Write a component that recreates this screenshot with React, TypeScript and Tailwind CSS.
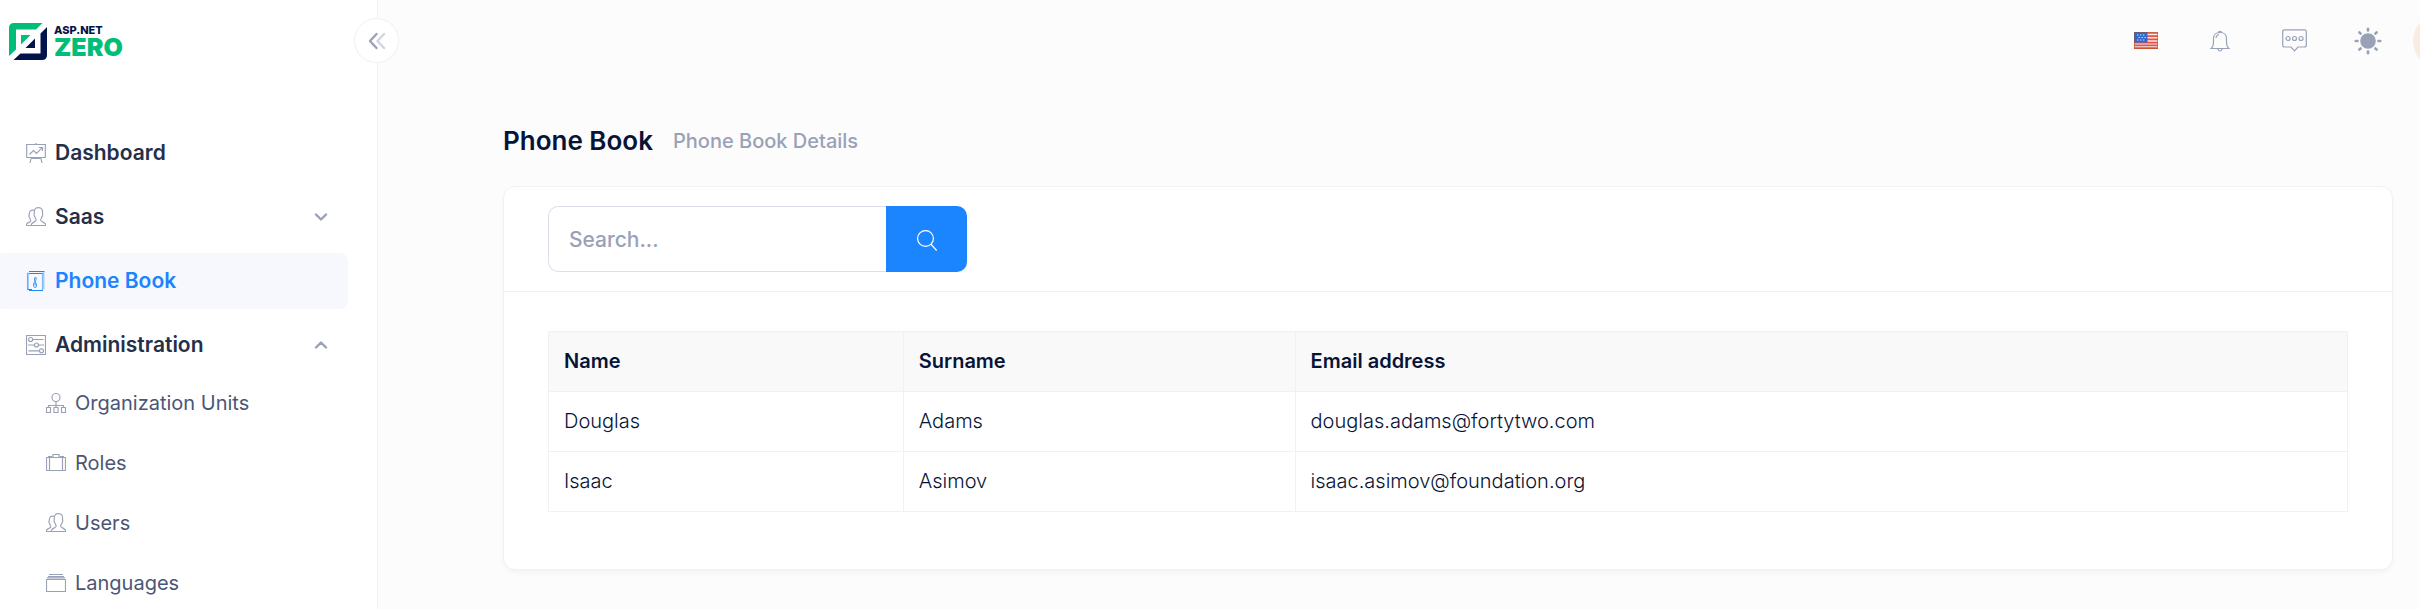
import type { ReactNode } from "react";

type IconProps = { className?: string; children: ReactNode };

function LineIcon({ className = "", children }: IconProps) {
  return (
    <svg
      viewBox="0 0 20 20"
      fill="none"
      stroke="currentColor"
      strokeWidth="1.150"
      aria-hidden="true"
      className={`size-5 shrink-0 ${className}`}
    >
      {children}
    </svg>
  );
}

const icons = {
  board: (
    <LineIcon>
      <path d="M0 1.5H20M.7 1.5V14.5H19.3V1.5M10 0V1.5M5 15.5L4 20M15 15.5L16 20M5 15.5H15" />
      <path d="M3.5 11.5L7.5 7.5L10.5 10.5L16 4.8M13 4.5H16.5V8" />
    </LineIcon>
  ),
  users: (
    <LineIcon>
      <path d="M5.5 18.5H19.5V17.2C19.2 15.4 14.8 14.9 14.6 13.3C14.5 12.2 15.6 11.6 16 9.5C16.7 9 17 7.6 16.5 7C16.9 3 16 .6 12.4.6S8 3 8.3 7C7.8 7.6 8.1 9 8.8 9.5C9.2 11.6 10.3 12.2 10.2 13.3C10 14.9 5.8 15.4 5.5 17.2Z" />
      <path d="M8 3.2C5 2.6 3 4 3.2 8.2C2.7 8.8 2.9 10 3.6 10.4C3.9 12.2 4.9 12.8 4.8 13.9C4.6 15.3.7 15.5.5 17.3V18.5H5.5" />
    </LineIcon>
  ),
  book: (
    <LineIcon>
      <path d="M2 1.5V19M17.500 1V18.500" strokeWidth="2" opacity=".35" />
      <path d="M3 .5H18.500M3 2.500H16.500M3 19.500H17M1.500 18.500H6" />
      <path d="M16.500 2.500V19.500M1.500 2V18.500" opacity=".45" />
      <path d="M9.500 6C10.500 7.500 10.500 8.500 9 10.500C7 12.500 7 16 9 16.500S11 13 9 10.500C8 9 8.500 7 9.500 6ZM9 12V14.500" strokeWidth=".9" />
    </LineIcon>
  ),
  sliders: (
    <LineIcon>
      <path d="M.5.5H19.5V19.5H.5ZM6.5 4.5H17.5M2 10H8.5M12.5 10H18M2.5 15.8H13.5" />
      <circle cx="4.6" cy="4.5" r="2" />
      <circle cx="10.5" cy="10" r="2" />
      <circle cx="15.5" cy="15.8" r="2" />
    </LineIcon>
  ),
  org: (
    <LineIcon>
      <circle cx="10" cy="4.5" r="4" />
      <path d="M10 8.5V14.5M2.5 14.5V12.5H17.5V14.5M.5 14.5H4.5V19.5H.5ZM8 14.5H12V19.5H8ZM15.5 14.5H19.5V19.5H15.5Z" />
    </LineIcon>
  ),
  case: (
    <LineIcon>
      <path d="M.5 4.5H19.500V17.500H.5ZM3.500 4.500V17.500M16.500 4.500V17.500M7 4V1.500H13V4M2 3.500H6M14 3.500H18" />
    </LineIcon>
  ),
  stack: (
    <LineIcon>
      <path d="M.5 6.5H19.5V18.5H.5ZM3 1.5H17M2 3.5H18M1 4.8H19" />
    </LineIcon>
  ),
};

function Chevron({ up = false }: { up?: boolean }) {
  return (
    <svg viewBox="0 0 14 8" fill="none" stroke="#99a1b7" strokeWidth="2.400" strokeLinecap="round" strokeLinejoin="round" className="ml-auto h-2 w-3.5" aria-hidden="true">
      <path d={up ? "M2 6.5L7 1.5L12 6.5" : "M2 1.5L7 6.5L12 1.5"} />
    </svg>
  );
}

const menu = [
  { label: "Dashboard", icon: icons.board },
  { label: "Saas", icon: icons.users, state: "closed" },
  { label: "Phone Book", icon: icons.book, active: true },
  { label: "Administration", icon: icons.sliders, state: "open" },
];

const submenu = [
  { label: "Organization Units", icon: icons.org },
  { label: "Roles", icon: icons.case },
  { label: "Users", icon: icons.users },
  { label: "Languages", icon: icons.stack },
];

const people = [
  { name: "Douglas", surname: "Adams", email: "douglas.adams@fortytwo.com" },
  { name: "Isaac", surname: "Asimov", email: "isaac.asimov@foundation.org" },
];

function Logo() {
  return (
    <a href="#" aria-label="ASP.NET Zero" className="flex items-center gap-[7px]">
      <svg viewBox="0 0 38 37" className="h-[37px] w-[38px]" aria-hidden="true">
        <path d="M5 0H33.5L27 6.5H7V26.5L0 33V5Q0 0 5 0Z" fill="#00bd78" />
        <path d="M38 4V32Q38 37 33 37H4.500L11.500 30.500H31.500V10.500Z" fill="#02124b" />
        <path d="M12 12H21.500L12 21.500Z" fill="#00bd78" />
        <path d="M26 15.500V25H16.500Z" fill="#02124b" />
      </svg>
      <span className="flex flex-col">
        <span className="text-[11px] leading-[10px] font-extrabold text-[#02124b]">ASP.NET</span>
        <span className="text-[25px] leading-6 font-black text-[#00bd78]">ZERO</span>
      </span>
    </a>
  );
}

function Sidebar() {
  return (
    <aside className="relative w-[378px] shrink-0 border-r border-[#f1f1f2] bg-white">
      <div className="flex h-[83px] items-center pl-[9px]">
        <Logo />
      </div>
      <button
        type="button"
        aria-label="Collapse menu"
        className="absolute top-[18px] -right-[22px] flex size-[45px] items-center justify-center rounded-full border border-[#f1f1f2] bg-white"
      >
        <svg viewBox="0 0 18 18" fill="none" strokeWidth="2.400" strokeLinecap="round" strokeLinejoin="round" className="size-[18px]" aria-hidden="true">
          <path d="M16 2L9.500 9L16 16" stroke="#d1d5e2" />
          <path d="M8.500 2L2 9L8.500 16" stroke="#99a1b7" />
        </svg>
      </button>
      <nav aria-label="Main" className="mt-[42px] mr-[29px] -ml-1">
        <ul className="flex flex-col gap-2">
          {menu.map((item) => (
            <li key={item.label}>
              <a
                href="#"
                aria-current={item.active ? "page" : undefined}
                className={`flex h-14 items-center gap-[9px] rounded-lg pr-5 pl-[30px] text-[21px] font-semibold ${
                  item.active ? "bg-[#f6f8fd] text-[#1b84ff]" : "text-[#252f4a]"
                }`}
              >
                <span className={item.active ? "text-[#1b84ff]" : "text-[#99a1b7]"}>{item.icon}</span>
                {item.label}
                {item.state && <Chevron up={item.state === "open"} />}
              </a>
            </li>
          ))}
        </ul>
        <ul className="mt-1 flex flex-col gap-2">
          {submenu.map((item) => (
            <li key={item.label}>
              <a href="#" className="flex h-[52px] items-center gap-[9px] pl-[50px] text-[20px] text-[#4b5675]">
                <span className="text-[#99a1b7]">{item.icon}</span>
                {item.label}
              </a>
            </li>
          ))}
        </ul>
      </nav>
    </aside>
  );
}

function Flag() {
  return (
    <svg viewBox="0 0 24 17" className="h-[17px] w-6" aria-hidden="true">
      <rect width="24" height="17" fill="#f5e6e4" />
      <path d="M0 1H24M0 4.200H24M0 7.400H24M0 10.600H24M0 13.400H24M0 16.200H24" stroke="#ea5146" strokeWidth="1.700" />
      <rect width="13.500" height="10.500" fill="#2f68cf" />
      <path d="M3 3H12M4.500 5.500H12M3 8H12" stroke="#d4e4fb" strokeWidth="1.200" strokeDasharray="1.400 1.600" />
      <rect x=".5" y=".5" width="23" height="16" fill="none" stroke="#a6501f" strokeOpacity=".5" />
    </svg>
  );
}

function TopBar() {
  const button = "flex size-12 items-center justify-center text-[#99a1b7]";
  return (
    <header className="-mr-[49px] flex h-[81px] items-center justify-end gap-[21px]">
      <div className="flex gap-[26px]">
        <button type="button" aria-label="Language" className={button}>
          <Flag />
        </button>
        <button type="button" aria-label="Notifications" className={button}>
          <svg viewBox="0 0 20 22" fill="none" stroke="currentColor" className="h-[22px] w-5" aria-hidden="true">
            <path d="M1 18.500C3 17 3.500 15 3.500 12V8.500C3.500 5 6 2.500 10 2.500S16.500 5 16.500 8.500V12C16.500 15 17 17 19 18.500ZM8 2.500Q10 0 12 2.500M7.500 18.500Q10 23.500 12.500 18.500M6 8Q6.300 5.200 9 4.500" strokeWidth="1.200" />
          </svg>
        </button>
        <button type="button" aria-label="Chat" className={button}>
          <svg viewBox="0 0 25 23" fill="none" stroke="currentColor" className="h-[23px] w-[25px]" aria-hidden="true">
            <path d="M2.500.8H22.500Q24.300.8 24.300 2.600V16Q24.300 18 22.500 18H16L12.500 21.800L9 18H2.500Q.7 18 .7 16V2.600Q.7.8 2.500.8Z" strokeWidth="1.200" />
            <circle cx="6" cy="9.500" r="2" strokeWidth="1.200" />
            <circle cx="12.500" cy="9.500" r="2" strokeWidth="1.200" />
            <circle cx="19" cy="9.500" r="2" strokeWidth="1.200" />
          </svg>
        </button>
        <button type="button" aria-label="Theme" className={button}>
          <svg viewBox="0 0 28 28" fill="currentColor" stroke="currentColor" className="size-7" aria-hidden="true">
            <circle cx="14" cy="14" r="7.800" stroke="none" />
            <path d="M14 1.800V3.500M14 24.500V26.200M1.800 14H3.500M24.500 14H26.200M5.400 5.400L6.600 6.600M21.400 21.400L22.600 22.600M22.600 5.400L21.400 6.600M5.400 22.600L6.600 21.400" strokeWidth="2.700" strokeLinecap="round" />
          </svg>
        </button>
      </div>
      <button type="button" aria-label="Account" className="size-14 rounded-full bg-[#f8ede1]" />
    </header>
  );
}

export default function App() {
  const cell = "border border-[#f1f1f2] p-[15px] text-left leading-[29px]";
  return (
    <div className="flex h-screen overflow-hidden bg-[#fcfcfc] font-['Inter',sans-serif]">
      <Sidebar />
      <div className="min-w-0 flex-1">
        <TopBar />
        <main className="pt-[42px] pr-[27px] pl-[125px]">
          <div className="flex items-center gap-5">
            <h1 className="text-[26px] leading-9 font-semibold text-[#071437]">Phone Book</h1>
            <span className="text-[20px] leading-9 font-medium text-[#99a1b7]">Phone Book Details</span>
          </div>
          <section className="mt-[27px] rounded-xl border border-[#f1f1f2] bg-white shadow-[0_3px_4px_0_rgba(0,0,0,0.03)]">
            <form role="search" className="flex border-b border-[#f1f1f2] px-11 py-[19px]" onSubmit={(e) => e.preventDefault()}>
              <input
                type="text"
                aria-label="Search"
                placeholder="Search..."
                className="h-[66px] w-[338px] rounded-l-[10px] border border-r-0 border-[#dbdfe9] px-5 text-[21px] font-medium text-[#4b5675] outline-none placeholder:text-[#99a1b7]"
              />
              <button type="submit" aria-label="Search" className="flex w-[81px] items-center justify-center rounded-r-[10px] bg-[#1b84ff] text-white">
                <svg viewBox="0 0 20 21" fill="none" stroke="currentColor" strokeWidth="1.200" className="mt-0.5 h-[21px] w-5" aria-hidden="true">
                  <circle cx="8.500" cy="8.500" r="7.900" />
                  <path d="M13.800 14L19.700 20.500" />
                </svg>
              </button>
            </form>
            <div className="px-11 pt-[39px] pb-[57px]">
              <table className="w-full table-fixed border-collapse text-[20px] text-[#071437]">
                <thead>
                  <tr className="bg-[#f9f9f9]">
                    <th scope="col" className={`${cell} w-[19.72%] font-semibold`}>Name</th>
                    <th scope="col" className={`${cell} w-[21.78%] font-semibold`}>Surname</th>
                    <th scope="col" className={`${cell} font-semibold`}>Email address</th>
                  </tr>
                </thead>
                <tbody className="font-[350]">
                  {people.map((p) => (
                    <tr key={p.email}>
                      <td className={cell}>{p.name}</td>
                      <td className={cell}>{p.surname}</td>
                      <td className={cell}>{p.email}</td>
                    </tr>
                  ))}
                </tbody>
              </table>
            </div>
          </section>
        </main>
      </div>
    </div>
  );
}
